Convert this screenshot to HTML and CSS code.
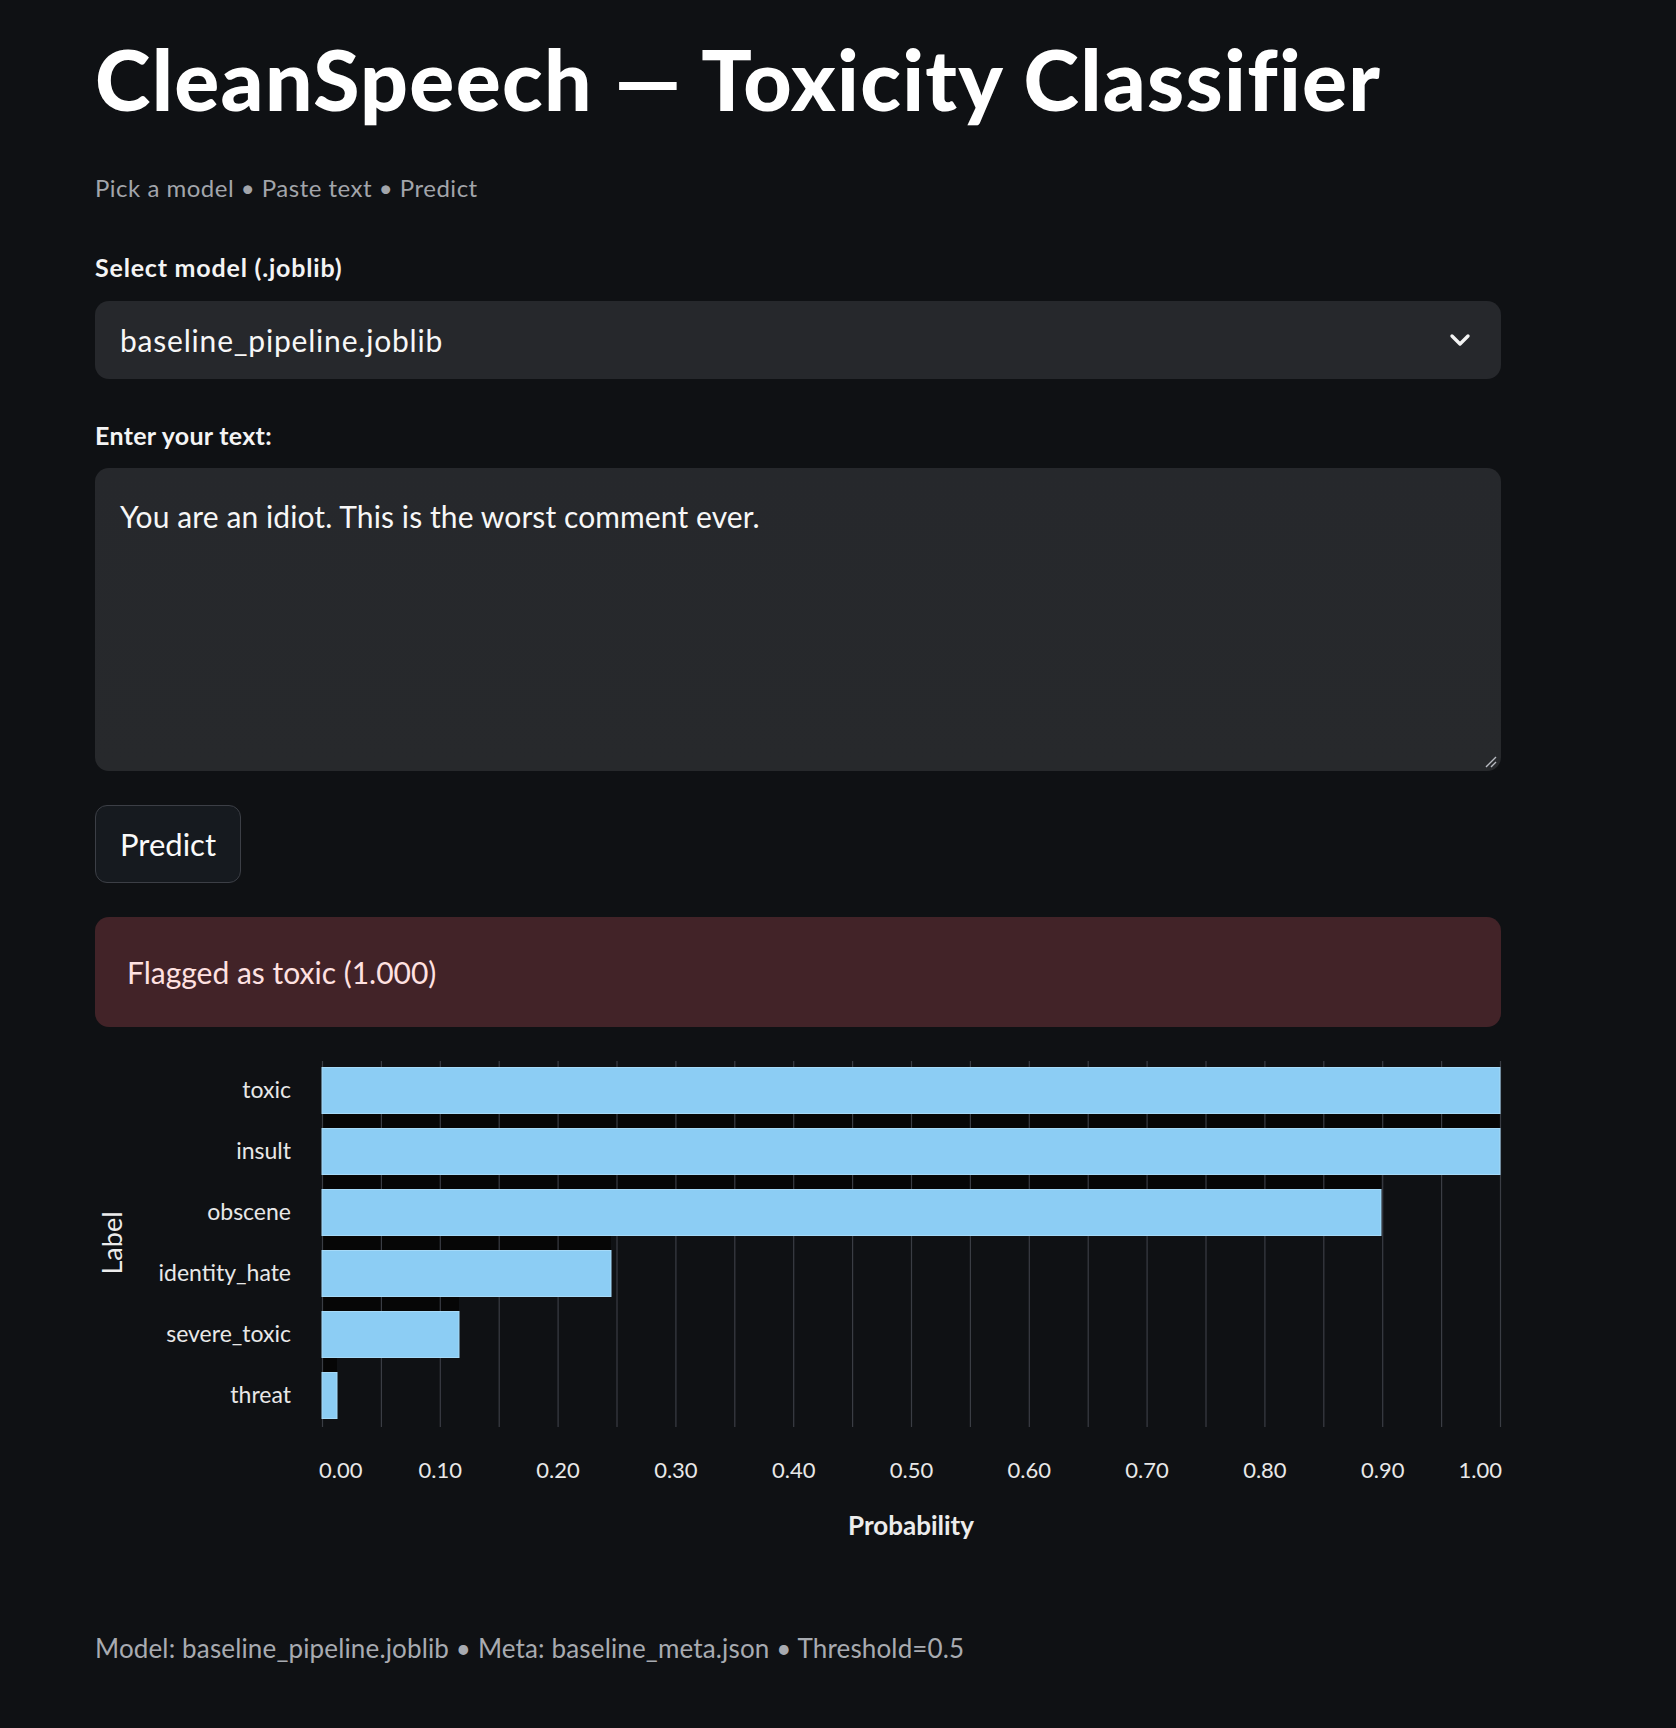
FILE: index.html
```html
<!DOCTYPE html>
<html lang="en">
<head>
<meta charset="utf-8">
<title>CleanSpeech — Toxicity Classifier</title>
<link rel="stylesheet" href="styles.css">
</head>
<body>
<main class="app">
  <h1 class="title">CleanSpeech — Toxicity Classifier</h1>
  <p class="subtitle">Pick a model • Paste text • Predict</p>

  <label class="field-label">Select model (.joblib)</label>
  <div class="select">
    <span class="select-value">baseline_pipeline.joblib</span>
    <svg class="chevron" width="22" height="14" viewBox="0 0 22 14"><path d="M3 3 L11 11 L19 3" fill="none" stroke="#f4f4f4" stroke-width="3.4" stroke-linecap="round" stroke-linejoin="round"/></svg>
  </div>

  <label class="field-label label-text">Enter your text:</label>
  <div class="textarea">
    <span class="textarea-value">You are an idiot. This is the worst comment ever.</span>
    <svg class="grip" width="14" height="14" viewBox="0 0 14 14"><path d="M13 3 L3 13 M13 8 L8 13" fill="none" stroke="#b9bcc2" stroke-width="1.4"/></svg>
  </div>

  <button class="btn">Predict</button>

  <div class="alert">Flagged as toxic (1.000)</div>

  <div class="chart-wrap">
  <svg class="chart" width="1406" height="510" viewBox="0 0 1406 510">
    <g class="strips">
      <rect x="227" y="68" width="1178" height="15" fill="#060606"/>
      <rect x="227" y="129" width="1059" height="15" fill="#060606"/>
      <rect x="227" y="190" width="289" height="15" fill="#060606"/>
      <rect x="227" y="251" width="137" height="15" fill="#060606"/>
      <rect x="227" y="312" width="15" height="15" fill="#060606"/>
    </g>
    <g class="grid" stroke="#3a3d44" stroke-width="1.2">
      <line x1="227.5" y1="16" x2="227.5" y2="382"/>
      <line x1="286.4" y1="16" x2="286.4" y2="382"/>
      <line x1="345.3" y1="16" x2="345.3" y2="382"/>
      <line x1="404.2" y1="16" x2="404.2" y2="382"/>
      <line x1="463.1" y1="16" x2="463.1" y2="382"/>
      <line x1="522" y1="16" x2="522" y2="382"/>
      <line x1="580.9" y1="16" x2="580.9" y2="382"/>
      <line x1="639.8" y1="16" x2="639.8" y2="382"/>
      <line x1="698.7" y1="16" x2="698.7" y2="382"/>
      <line x1="757.6" y1="16" x2="757.6" y2="382"/>
      <line x1="816.5" y1="16" x2="816.5" y2="382"/>
      <line x1="875.4" y1="16" x2="875.4" y2="382"/>
      <line x1="934.3" y1="16" x2="934.3" y2="382"/>
      <line x1="993.2" y1="16" x2="993.2" y2="382"/>
      <line x1="1052.1" y1="16" x2="1052.1" y2="382"/>
      <line x1="1111" y1="16" x2="1111" y2="382"/>
      <line x1="1169.9" y1="16" x2="1169.9" y2="382"/>
      <line x1="1228.8" y1="16" x2="1228.8" y2="382"/>
      <line x1="1287.7" y1="16" x2="1287.7" y2="382"/>
      <line x1="1346.6" y1="16" x2="1346.6" y2="382"/>
      <line x1="1405.5" y1="16" x2="1405.5" y2="382"/>
    </g>
    <g class="bars" fill="#8ccdf4" stroke="#a6daf8" stroke-width="1">
      <rect x="227" y="22.5" width="1178" height="46"/>
      <rect x="227" y="83.5" width="1178" height="46"/>
      <rect x="227" y="144.5" width="1059" height="46"/>
      <rect x="227" y="205.5" width="289" height="46"/>
      <rect x="227" y="266.5" width="137" height="46"/>
      <rect x="227" y="327.5" width="15" height="46"/>
    </g>
    <g class="ylabels" text-anchor="end">
      <text x="196" y="53">toxic</text>
      <text x="196" y="114">insult</text>
      <text x="196" y="175">obscene</text>
      <text x="196" y="236">identity_hate</text>
      <text x="196" y="297">severe_toxic</text>
      <text x="196" y="358">threat</text>
    </g>
    <text class="axis-title label-title" transform="translate(27 198) rotate(-90)" text-anchor="middle">Label</text>
    <g class="xlabels" text-anchor="middle">
      <text x="224" y="433" text-anchor="start">0.00</text>
      <text x="345.3" y="433">0.10</text>
      <text x="463.1" y="433">0.20</text>
      <text x="580.9" y="433">0.30</text>
      <text x="698.7" y="433">0.40</text>
      <text x="816.5" y="433">0.50</text>
      <text x="934.3" y="433">0.60</text>
      <text x="1052.1" y="433">0.70</text>
      <text x="1169.9" y="433">0.80</text>
      <text x="1287.7" y="433">0.90</text>
      <text x="1407" y="433" text-anchor="end">1.00</text>
    </g>
    <text class="axis-title prob-title" x="816" y="490" text-anchor="middle">Probability</text>
  </svg>
  </div>

  <p class="footer">Model: baseline_pipeline.joblib • Meta: baseline_meta.json • Threshold=0.5</p>
</main>
</body>
</html>
```

FILE: styles.css
```css
* { box-sizing: border-box; }

html, body {
  margin: 0;
  padding: 0;
  background: #0f1114;
}

body {
  font-family: "Lato", "Open Sans", "Liberation Sans", sans-serif;
  color: #f5f5f5;
}

.app {
  width: 1406px;
  margin-left: 95px;
  padding-top: 29px;
  display: flex;
  flex-direction: column;
  align-items: flex-start;
}

.title {
  margin: 0;
  font-size: 84px;
  line-height: 100px;
  height: 100px;
  font-weight: 900;
  color: #ffffff;
  white-space: nowrap;
  letter-spacing: 1.3px;
}

.subtitle {
  margin: 43px 0 0;
  font-size: 24px;
  line-height: 32px;
  color: #a2a5ab;
  letter-spacing: 0.5px;
}

.field-label {
  margin-top: 47px;
  font-size: 25px;
  line-height: 32px;
  font-weight: 700;
  color: #f4f4f4;
  letter-spacing: 0.8px;
}

.label-text {
  margin-top: 40px;
  letter-spacing: 0.3px;
}

.select {
  margin-top: 18px;
  width: 100%;
  height: 78px;
  border-radius: 14px;
  background: #26282c;
  display: flex;
  align-items: center;
  justify-content: space-between;
  padding: 0 30px 0 25px;
}

.select-value {
  font-size: 30px;
  color: #f7f7f7;
  letter-spacing: 0.8px;
}

.chevron {
  display: block;
}

.textarea {
  position: relative;
  margin-top: 17px;
  width: 100%;
  height: 303px;
  border-radius: 14px;
  background: linear-gradient(180deg, #26282c 0%, #27292c 100%);
  padding: 29px 25px;
}

.textarea-value {
  display: block;
  font-size: 30px;
  line-height: 38px;
  color: #f7f7f7;
  letter-spacing: 0.1px;
}

.grip {
  position: absolute;
  right: 4px;
  bottom: 3px;
}

.btn {
  margin-top: 34px;
  width: 146px;
  height: 78px;
  border-radius: 12px;
  border: 1.5px solid #3c3f46;
  background: #161a1f;
  color: #fafafa;
  font-family: inherit;
  font-size: 31px;
  padding: 0;
}

.alert {
  margin-top: 34px;
  width: 100%;
  height: 110px;
  border-radius: 14px;
  background: #422328;
  color: #ffe1e1;
  font-size: 30px;
  display: flex;
  align-items: center;
  padding: 0 32px;
}

.chart-wrap {
  margin-top: 18px;
  width: 100%;
}

.chart {
  display: block;
  overflow: visible;
  font-family: "Lato", "Open Sans", sans-serif;
}

.ylabels text {
  font-size: 23px;
  fill: #e8e8e8;
}

.xlabels text {
  font-size: 22px;
  fill: #e8e8e8;
}

.axis-title {
  fill: #ececec;
}

.label-title {
  font-size: 27px;
}

.prob-title {
  font-size: 26px;
  font-weight: 700;
}

.footer {
  margin: 77px 0 0;
  font-size: 26px;
  line-height: 32px;
  color: #a8abb1;
  letter-spacing: 0.15px;
}
```
